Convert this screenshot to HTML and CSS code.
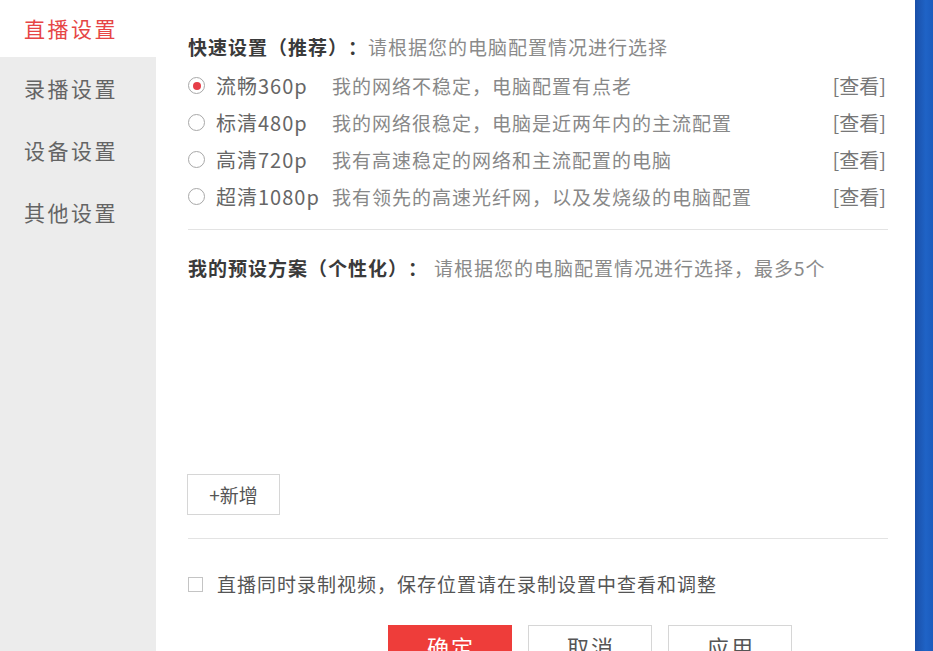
FILE: index.html
```html
<!DOCTYPE html>
<html lang="zh-CN">
<head>
    <meta charset="UTF-8">
    <meta name="viewport" content="width=device-width, initial-scale=1.0">
    <title>直播设置</title>
    <link rel="stylesheet" href="styles.css">
</head>
<body>
    <div class="sidebar">
        <div class="nav-item active">直播设置</div>
        <div class="nav-item">录播设置</div>
        <div class="nav-item">设备设置</div>
        <div class="nav-item">其他设置</div>
    </div>
    <div class="main">
        <div class="section-title">
            <b>快速设置（推荐）：</b><span class="hint">请根据您的电脑配置情况进行选择</span>
        </div>
        <div class="options">
            <div class="option">
                <span class="radio checked"></span>
                <span class="opt-name">流畅360p</span>
                <span class="opt-desc">我的网络不稳定，电脑配置有点老</span>
                <span class="opt-link">[查看]</span>
            </div>
            <div class="option">
                <span class="radio"></span>
                <span class="opt-name">标清480p</span>
                <span class="opt-desc">我的网络很稳定，电脑是近两年内的主流配置</span>
                <span class="opt-link">[查看]</span>
            </div>
            <div class="option">
                <span class="radio"></span>
                <span class="opt-name">高清720p</span>
                <span class="opt-desc">我有高速稳定的网络和主流配置的电脑</span>
                <span class="opt-link">[查看]</span>
            </div>
            <div class="option">
                <span class="radio"></span>
                <span class="opt-name">超清1080p</span>
                <span class="opt-desc">我有领先的高速光纤网，以及发烧级的电脑配置</span>
                <span class="opt-link">[查看]</span>
            </div>
        </div>
        <div class="divider"></div>
        <div class="section-title preset-title">
            <b>我的预设方案（个性化）：</b><span class="hint">请根据您的电脑配置情况进行选择，最多5个</span>
        </div>
        <div class="preset-list"></div>
        <button class="add-btn">+新增</button>
        <div class="divider second"></div>
        <label class="record-row">
            <span class="checkbox"></span>
            直播同时录制视频，保存位置请在录制设置中查看和调整
        </label>
        <div class="actions">
            <button class="btn primary">确定</button>
            <button class="btn">取消</button>
            <button class="btn">应用</button>
        </div>
    </div>
    <div class="edge"></div>
</body>
</html>
```

FILE: styles.css
```css
html, body {
    margin: 0;
    padding: 0;
    height: 651px;
    overflow: hidden;
}
body {
    display: flex;
    background: #ffffff;
    font-family: "Noto Sans CJK SC", "Noto Sans", sans-serif;
    color: #555;
    text-spacing-trim: space-all;
}
.sidebar {
    width: 156px;
    flex-shrink: 0;
    background-color: #ececec;
}
.nav-item {
    height: 62px;
    line-height: 62px;
    padding-left: 24px;
    font-size: 21px;
    letter-spacing: 2.5px;
    color: #646464;
}
.nav-item.active {
    height: 57px;
    line-height: 56px;
    background-color: #ffffff;
    color: #e64545;
}
.main {
    flex: 1;
    padding: 35px 27px 0 32px;
    font-size: 19px;
    letter-spacing: 1px;
}
.section-title {
    line-height: 24px;
    color: #8a8a8a;
}
.section-title b {
    color: #3a3a3a;
    font-weight: bold;
    letter-spacing: 1px;
}
.preset-title b {
    margin-right: 6px;
}
.options {
    margin-top: 8px;
}
.option {
    display: flex;
    align-items: center;
    height: 37px;
}
.radio {
    width: 15px;
    height: 15px;
    border: 1px solid #a8a8a8;
    border-radius: 50%;
    margin-right: 11px;
    position: relative;
    background: #fff;
}
.radio.checked::after {
    content: "";
    position: absolute;
    left: 3.5px;
    top: 3.5px;
    width: 8px;
    height: 8px;
    border-radius: 50%;
    background-color: #e63e48;
}
.opt-name {
    width: 116px;
    color: #666;
    letter-spacing: 1px;
    font-size: 20px;
}
.opt-desc {
    flex: 1;
    color: #888;
}
.opt-link {
    color: #777;
    letter-spacing: 0;
    font-size: 20px;
    margin-right: 2px;
}
.divider {
    height: 1px;
    background-color: #e3e3e3;
    margin-top: 14px;
}
.preset-title {
    margin-top: 26px;
}
.preset-list {
    height: 194px;
}
.add-btn {
    display: block;
    width: 93px;
    height: 41px;
    margin-left: -1px;
    border: 1px solid #d6d6d6;
    background: #fff;
    font-family: inherit;
    font-size: 19px;
    color: #555;
    padding: 0;
}
.divider.second {
    margin-top: 23px;
}
.record-row {
    display: flex;
    align-items: center;
    margin-top: 33px;
    line-height: 24px;
    color: #555;
}
.checkbox {
    width: 13px;
    height: 13px;
    border: 1px solid #c4c4c4;
    margin-right: 14px;
}
.actions {
    display: flex;
    gap: 16px;
    margin-top: 29px;
    padding-left: 200px;
}
.btn {
    width: 124px;
    height: 42px;
    border: 1px solid #d6d6d6;
    background: #fff;
    font-family: inherit;
    font-size: 22px;
    color: #555;
    letter-spacing: 2px;
    padding: 0 0 0 2px;
}
.btn.primary {
    background-color: #ee3d3a;
    border-color: #ee3d3a;
    color: #fff;
}
.edge {
    width: 18px;
    flex-shrink: 0;
    background: linear-gradient(to right, #1a4fa8, #1f63c6 60%, #1b5bbd);
}
```
